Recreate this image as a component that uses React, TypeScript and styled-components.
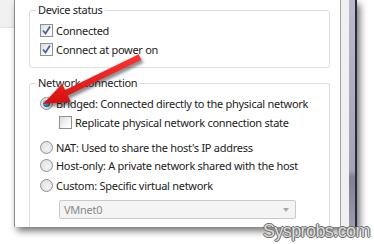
import * as React from "react";
import styled, { createGlobalStyle } from "styled-components";

const GlobalStyle = createGlobalStyle`
  html, body {
    margin: 0;
    padding: 0;
    background: #ffffff;
  }
  body {
    font-family: "Noto Sans", "Open Sans", sans-serif;
  }
`;

const Page = styled.div`
  position: relative;
  width: 374px;
  height: 244px;
  overflow: hidden;
  display: flex;
  align-items: flex-start;
  background: #ffffff;
`;

const Gutter = styled.div`
  width: 14px;
  flex-shrink: 0;
  display: flex;
  flex-direction: column;
`;

const GutterTab = styled.div`
  height: 27px;
  background: #f1f1f1;
  border-bottom: 1px solid #e4e4e4;
`;

const Window = styled.div`
  width: 343px;
  height: 227px;
  display: flex;
  border-left: 1px solid #8c8c8c;
  box-sizing: border-box;
  background: #ffffff;
  box-shadow: 3px 4px 7px rgba(0, 0, 0, 0.55);
`;

const Content = styled.div`
  width: 325px;
  padding: 3px 10px 0 14px;
  box-sizing: border-box;
  display: flex;
  flex-direction: column;
  gap: 8px;
  font-size: 11px;
  letter-spacing: -0.28px;
  color: #1c1c1c;
`;

const Chrome = styled.div`
  display: flex;
  border-left: 1px solid #a4a4a4;
`;

const ChromeStrip = styled.div`
  width: 8px;
  background: #f0f0f0;
`;

const ScrollBar = styled.div`
  width: 6px;
  background: linear-gradient(180deg, #b9b9cc 0%, #a2a2b8 75%, #808095 78%, #9a9ab0 100%);
  border-right: 2px solid #2b2b38;
`;

const Group = styled.fieldset<{ $open?: boolean }>`
  margin: 0;
  padding: 4px 0 0 10px;
  border: 1px solid #d5dfe5;
  border-radius: 3px;
  ${(p) =>
    p.$open
      ? "border-bottom: none; border-bottom-left-radius: 0; border-bottom-right-radius: 0; flex: 1; padding-top: 5px;"
      : "height: 65px; box-sizing: border-box;"}
  display: flex;
  flex-direction: column;
`;

const Legend = styled.legend`
  padding: 0 2px;
  margin-left: -4px;
  font-size: 11px;
  line-height: 14px;
  color: #1c1c1c;
`;

const Row = styled.label<{ $indent?: number; $top?: number }>`
  display: flex;
  align-items: center;
  gap: 3px;
  height: 18px;
  margin-left: ${(p) => p.$indent ?? 0}px;
  margin-top: ${(p) => p.$top ?? 0}px;
  white-space: nowrap;
`;

const Box = styled.span`
  width: 13px;
  height: 13px;
  box-sizing: border-box;
  border: 1px solid #8e8f8f;
  background: linear-gradient(135deg, #dcdcdc 0%, #f6f6f6 60%, #ffffff 100%);
  display: flex;
  align-items: center;
  justify-content: center;
  flex-shrink: 0;
`;

const Radio = styled.span<{ $on?: boolean }>`
  width: 13px;
  height: 13px;
  box-sizing: border-box;
  border-radius: 50%;
  border: 1px solid #8e8f8f;
  background: radial-gradient(circle at 60% 60%, #f4f4f4 0%, #dadada 100%);
  display: flex;
  align-items: center;
  justify-content: center;
  flex-shrink: 0;
  &::after {
    content: "";
    display: ${(p) => (p.$on ? "block" : "none")};
    width: 7px;
    height: 7px;
    border-radius: 50%;
    background: radial-gradient(circle at 40% 35%, #9fd8f6 0%, #2a7fb8 55%, #0d3b66 100%);
  }
`;

const Select = styled.div`
  margin: 6px 0 0 19px;
  width: 237px;
  height: 19px;
  box-sizing: border-box;
  border: 1px solid #c9c9c9;
  border-radius: 2px;
  background: #f4f4f4;
  display: flex;
  align-items: center;
  justify-content: space-between;
  padding: 0 6px 0 4px;
  color: #8a8a8a;
`;

const Caret = styled.span`
  width: 0;
  height: 0;
  border-left: 3px solid transparent;
  border-right: 3px solid transparent;
  border-top: 4px solid #a8a8a8;
`;

const Arrow = styled.svg`
  position: absolute;
  left: 0;
  top: 0;
  pointer-events: none;
`;

const Watermark = styled.div`
  position: absolute;
  left: 263px;
  top: 221px;
  font-family: "Liberation Sans", sans-serif;
  font-size: 18px;
  letter-spacing: -0.6px;
  color: #dcdcdc;
  text-shadow: -1px 0 #6a6a6a, 1px 0 #6a6a6a, 0 -1px #6a6a6a, 0 1px #6a6a6a;
`;

const Check = () => (
  <svg width="11" height="11" viewBox="0 0 11 11">
    <path d="M2 5.5 L4.5 8.5 L9 1.5" fill="none" stroke="#4d6396" strokeWidth="1.8" />
  </svg>
);

const arrowPoints =
  "141.3,59.7 67.7,95.4 70.8,101.7 43,104 62,83.7 65.1,90 138.7,54.3";

export default function App(): JSX.Element {
  return (
    <>
      <GlobalStyle />
      <Page>
        <Gutter>
          <GutterTab />
        </Gutter>
        <Window>
          <Content>
            <Group>
              <Legend>Device status</Legend>
              <Row>
                <Box>
                  <Check />
                </Box>
                Connected
              </Row>
              <Row $top={1}>
                <Box>
                  <Check />
                </Box>
                Connect at power on
              </Row>
            </Group>
            <Group $open>
              <Legend>Network connection</Legend>
              <Row $top={-1}>
                <Radio $on />
                Bridged: Connected directly to the physical network
              </Row>
              <Row $indent={19} $top={1}>
                <Box />
                Replicate physical network connection state
              </Row>
              <Row $top={7}>
                <Radio />
                NAT: Used to share the host's IP address
              </Row>
              <Row $top={0}>
                <Radio />
                Host-only: A private network shared with the host
              </Row>
              <Row $top={2}>
                <Radio />
                Custom: Specific virtual network
              </Row>
              <Select>
                VMnet0
                <Caret />
              </Select>
            </Group>
          </Content>
          <Chrome>
            <ChromeStrip />
            <ScrollBar />
          </Chrome>
        </Window>
        <Arrow width="374" height="244" viewBox="0 0 374 244">
          <defs>
            <filter id="sh" x="-20%" y="-30%" width="140%" height="160%">
              <feGaussianBlur stdDeviation="1.8" />
            </filter>
            <linearGradient id="rd" x1="0" y1="0" x2="0" y2="1">
              <stop offset="0" stopColor="#ff3434" />
              <stop offset="1" stopColor="#d50f0f" />
            </linearGradient>
          </defs>
          <polygon points={arrowPoints} fill="#1e1e1e" opacity="0.5" transform="translate(2,3)" filter="url(#sh)" />
          <polygon points={arrowPoints} fill="url(#rd)" />
        </Arrow>
        <Watermark>Sysprobs.com</Watermark>
      </Page>
    </>
  );
}
